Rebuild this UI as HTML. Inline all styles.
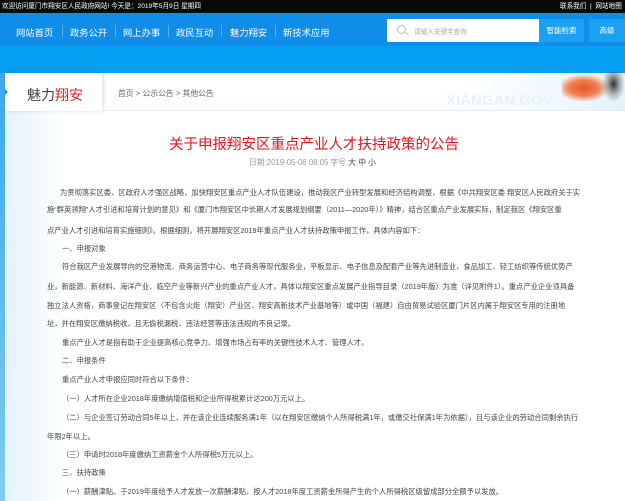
<!DOCTYPE html>
<html><head><meta charset="utf-8"><style>
*{margin:0;padding:0;box-sizing:border-box}
body{width:625px;height:501px;overflow:hidden;background:#fff;font-family:"Liberation Sans","Noto Sans CJK SC",sans-serif;position:relative}
.a{position:absolute;white-space:nowrap}
.top{left:0;top:0;width:625px;height:13px;background:#0a0a0a;color:#fff;font-size:6.6px;line-height:13px}
.nav{left:0;top:13px;width:625px;height:33px;background:#0f8de9}
.band{left:0;top:46px;width:625px;height:27px;background:#069ff2}
.ni{color:#fff;font-size:9.3px;top:25px}
.sep{top:25px;width:1px;height:12px;background:#4fb0f2}
.p{font-size:7.3px;color:#444;line-height:9px}
</style></head><body>
<div class="a top"><span style="position:absolute;left:2px">欢迎访问厦门市翔安区人民政府网站! 今天是：2019年5月9日 星期四</span><span style="position:absolute;left:560px">联系我们 &nbsp;|&nbsp; 网站地图</span></div>
<div class="a nav"></div>
<div class="a band"></div>
<div class="a ni" style="left:16px">网站首页</div><div class="a sep" style="left:62px"></div>
<div class="a ni" style="left:70px">政务公开</div><div class="a sep" style="left:115px"></div>
<div class="a ni" style="left:123px">网上办事</div><div class="a sep" style="left:168px"></div>
<div class="a ni" style="left:176px">政民互动</div><div class="a sep" style="left:221px"></div>
<div class="a ni" style="left:230px">魅力翔安</div><div class="a sep" style="left:275px"></div>
<div class="a ni" style="left:283px">新技术应用</div>
<div class="a" style="left:387px;top:19px;width:152px;height:23px;background:#fff"></div>
<div class="a" style="left:397px;top:25px;width:9px;height:9px;border:1px solid #bbb;border-radius:50%"></div>
<div class="a" style="left:405px;top:33px;width:4px;height:1px;background:#bbb;transform:rotate(45deg)"></div>
<div class="a" style="left:414px;top:26px;font-size:6.6px;color:#aaa">请输入关键字查询</div>
<div class="a" style="left:539px;top:19px;width:45px;height:23px;background:#1ba1f2;color:#fff;font-size:7.5px;line-height:23px;text-align:center">智能检索</div>
<div class="a" style="left:589px;top:19px;width:36px;height:23px;background:#1ba1f2;color:#fff;font-size:7.5px;line-height:23px;text-align:center">高级</div>
<div class="a" style="left:0;top:73px;width:5px;height:428px;background:linear-gradient(#39a7f0,#7fcdf3)"></div>
<div class="a" style="left:5px;top:111px;width:60px;height:390px;background:linear-gradient(90deg,#e3f3fc,#fff)"></div>
<div class="a" style="left:5px;top:73px;width:620px;height:38px;background:linear-gradient(90deg,#fff 75%,#e3f2fc);border-bottom:1px solid #e4eef5"></div>
<div class="a" style="left:5px;top:73px;width:97px;height:38px;background:#fff;box-shadow:2px 0 4px rgba(0,0,0,.12)"></div>
<div class="a" style="left:5px;top:89px;width:0;height:0;border-left:3px solid #1a8fe8;border-top:3px solid transparent;border-bottom:3px solid transparent"></div>
<div class="a" style="left:27px;top:85px;font-size:14px;color:#444">魅力<span style="color:#e02020">翔安</span></div>
<div class="a" style="left:118px;top:88px;font-size:7.8px;color:#666">首页 &gt; 公示公告 &gt; 其他公告</div>
<div class="a" style="left:446px;top:92px;font-size:15px;font-weight:bold;color:#e6f2fd">XIANGAN.GOV</div>
<div class="a" style="left:562px;top:74px;width:48px;height:28px;background:radial-gradient(ellipse at 45% 50%,#e8562a 0,#f08050 40%,rgba(255,255,255,0) 70%)"></div>
<div class="a" style="left:602px;top:72px;width:23px;height:30px;background:radial-gradient(ellipse at 50% 40%,#333 0,rgba(80,80,80,.4) 40%,rgba(255,255,255,0) 70%)"></div>
<div class="a" style="left:169px;top:133px;font-size:14.5px;color:#e3161d">关于申报翔安区重点产业人才扶持政策的公告</div>
<div class="a" style="left:249px;top:157px;font-size:7.8px;color:#999">日期:2019-05-06 08:05 字号:<span style="color:#444">大 中 小</span></div>
<div class="a p" style="left:60px;top:188px">为贯彻落实区委、区政府人才强区战略，加快翔安区重点产业人才队伍建设，推动我区产业转型发展和经济结构调整，根据《中共翔安区委 翔安区人民政府关于实</div>
<div class="a p" style="left:47px;top:205px">施“群英领翔”人才引进和培育计划的意见》和《厦门市翔安区中长期人才发展规划纲要（2011—2020年）》精神，结合区重点产业发展实际，制定我区《翔安区重</div>
<div class="a p" style="left:47px;top:226px">点产业人才引进和培育实施细则》。根据细则，将开展翔安区2019年重点产业人才扶持政策申报工作，具体内容如下：</div>
<div class="a p" style="left:62px;top:244px">一、申报对象</div>
<div class="a p" style="left:62px;top:262px">符合我区产业发展导向的空港物流、商务运营中心、电子商务等现代服务业，平板显示、电子信息及配套产业等先进制造业，食品加工、轻工纺织等传统优势产</div>
<div class="a p" style="left:47px;top:282px">业，新能源、新材料、海洋产业、临空产业等新兴产业的重点产业人才，具体以翔安区重点发展产业指导目录（2019年版）为准（详见附件1）。重点产业企业须具备</div>
<div class="a p" style="left:47px;top:301px">独立法人资格，商事登记在翔安区（不包含火炬（翔安）产业区、翔安高新技术产业基地等）或中国（福建）自由贸易试验区厦门片区内属于翔安区专用的注册地</div>
<div class="a p" style="left:47px;top:319px">址，并在翔安区缴纳税收，且无偷税漏税、违法经营等违法违规的不良记录。</div>
<div class="a p" style="left:62px;top:338px">重点产业人才是指有助于企业提高核心竞争力、增强市场占有率的关键性技术人才、管理人才。</div>
<div class="a p" style="left:62px;top:356px">二、申报条件</div>
<div class="a p" style="left:62px;top:375px">重点产业人才申报应同时符合以下条件：</div>
<div class="a p" style="left:62px;top:394px">（一）人才所在企业2018年度缴纳增值税和企业所得税累计达200万元以上。</div>
<div class="a p" style="left:62px;top:413px">（二）与企业签订劳动合同5年以上，并在该企业连续服务满1年（以在翔安区缴纳个人所得税满1年，或缴交社保满1年为依据），且与该企业的劳动合同剩余执行</div>
<div class="a p" style="left:47px;top:432px">年限2年以上。</div>
<div class="a p" style="left:62px;top:450px">（三）申请时2018年度缴纳工资薪金个人所得税5万元以上。</div>
<div class="a p" style="left:62px;top:468px">三、扶持政策</div>
<div class="a p" style="left:62px;top:487px">（一）薪酬津贴。于2019年度给予人才发放一次薪酬津贴，按人才2018年度工资薪金所得产生的个人所得税区级留成部分全额予以发放。</div>
</body></html>
